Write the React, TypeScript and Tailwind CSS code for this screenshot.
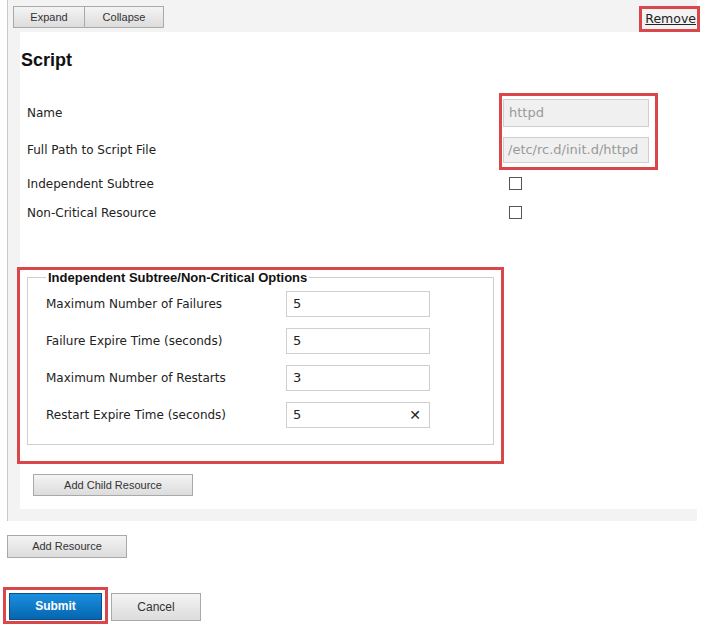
import React from 'react';

const label = "text-[12px] text-[#222] font-['DejaVu_Sans',sans-serif]";
const btn =
  "border border-[#a9a9a9] bg-gradient-to-b from-[#f4f4f4] to-[#dcdcdc] text-[11px] text-[#333] font-['Liberation_Sans',Arial,sans-serif]";

function Row({ name, value, clear }: { name: string; value: string; clear?: boolean }) {
  return (
    <div className="flex items-center h-[26px] mb-[11px]">
      <div className={`${label} w-[240px]`}>{name}</div>
      <div className="w-[144px] h-[26px] border border-[#cfcfcf] bg-white flex items-center justify-between pl-[6px] pr-[8px] text-[13px] font-['DejaVu_Sans',sans-serif] text-[#222]">
        <span>{value}</span>
        {clear && <span className="text-[14px]">✕</span>}
      </div>
    </div>
  );
}

export default function App() {
  return (
    <div className="w-[707px] h-[627px] bg-white relative overflow-hidden">
      {/* resource panel */}
      <div className="ml-[7px] w-[690px] bg-[#f3f3f3] border-l border-[#c8c8c8] pb-[12px]">
        <div className="h-[32px] flex items-start justify-between">
          <div className="flex mt-[6px] ml-[5px]">
            <button className={`${btn} w-[72px] h-[22px]`}>Expand</button>
            <button className={`${btn} w-[79px] h-[22px] border-l-0`}>Collapse</button>
          </div>
          <div className="mt-[6px] mr-[-3px] border-[3px] border-[#d9474b] h-[26px] pl-[3px] pr-[1px] flex items-center">
            <span className="underline text-[12.5px] text-[#222] font-['DejaVu_Sans',sans-serif] leading-none">Remove</span>
          </div>
        </div>
        <div className="ml-[12px] bg-white pb-[13px] pt-[19px]">
          <h2 className="ml-[1px] text-[18px] font-bold text-[#111] font-['Liberation_Sans',Arial,sans-serif] leading-none">Script</h2>
          <div className="mt-[24px] flex">
            <div className="ml-[7px] w-[472px] flex flex-col pt-[6px]">
              <div className={`${label} h-[28px] flex items-center`}>Name</div>
              <div className={`${label} h-[26px] mt-[10px] flex items-center`}>Full Path to Script File</div>
              <div className={`${label} h-[13px] mt-[14px] flex items-center`}>Independent Subtree</div>
              <div className={`${label} h-[13px] mt-[16px] flex items-center`}>Non-Critical Resource</div>
            </div>
            <div className="flex flex-col">
              <div className="border-[3px] border-[#d9474b] pt-[3px] pb-[4px] pl-[1px] pr-[6px] flex flex-col gap-[10px]">
                <div className="w-[146px] h-[28px] border border-[#cfcfcf] bg-[#f0f0f0] flex items-center px-[5px] text-[13px] text-[#999] font-['DejaVu_Sans',sans-serif]">httpd</div>
                <div className="w-[146px] h-[26px] border border-[#cfcfcf] bg-[#f0f0f0] flex items-center px-[4px] text-[13px] text-[#999] font-['DejaVu_Sans',sans-serif] whitespace-nowrap overflow-hidden">/etc/rc.d/init.d/httpd</div>
              </div>
              <div className="ml-[10px] mt-[7px] w-[13px] h-[13px] border border-[#555] bg-white" />
              <div className="ml-[10px] mt-[16px] w-[13px] h-[13px] border border-[#555] bg-white" />
            </div>
          </div>
          <div className="mt-[48px] ml-[-3px] w-[487px] border-[3px] border-[#d9474b] pt-[1px] pb-[16px] px-[7px]">
            <fieldset className="border border-[#cfcfcf] pl-[18px] pt-[7px] pb-[5px] min-w-0">
              <legend className="px-[2px] text-[13px] font-bold text-[#111] font-['Liberation_Sans',Arial,sans-serif] leading-none">
                Independent Subtree/Non-Critical Options
              </legend>
              <Row name="Maximum Number of Failures" value="5" />
              <Row name="Failure Expire Time (seconds)" value="5" />
              <Row name="Maximum Number of Restarts" value="3" />
              <Row name="Restart Expire Time (seconds)" value="5" clear />
            </fieldset>
          </div>
          <button className={`${btn} ml-[13px] mt-[10px] w-[160px] h-[22px]`}>Add Child Resource</button>
        </div>
      </div>
      <div className="ml-[7px] mt-[11px]">
        <button className={`${btn} w-[120px] h-[23px]`}>Add Resource</button>
      </div>
      <div className="mt-[29px] ml-[3px] flex items-start gap-[3px]">
        <div className="border-[3px] border-[#d9474b] p-[3px] pb-[1px]">
          <button className="block w-[93px] h-[27px] border border-[#0a4f8a] bg-gradient-to-b from-[#1a8fe0] to-[#0566b0] text-white font-bold text-[12px] font-['Liberation_Sans',Arial,sans-serif]">
            Submit
          </button>
        </div>
        <button className={`${btn} mt-[6px] w-[90px] h-[28px] text-[12px]`}>Cancel</button>
      </div>
    </div>
  );
}
